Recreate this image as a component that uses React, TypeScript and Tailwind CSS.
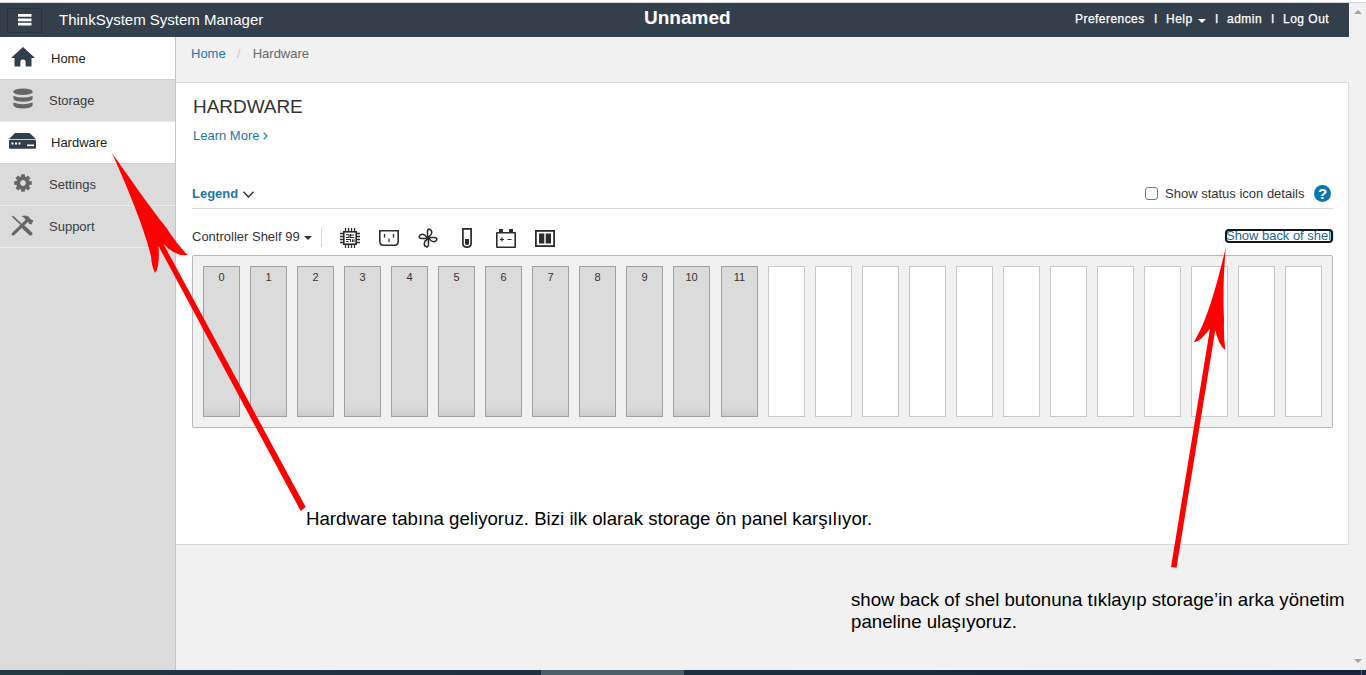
import type { ReactNode } from "react";

const ink = "#2b2b2b";

function HomeIcon() {
  return (
    <svg className="block" width="24" height="20" viewBox="0 0 24 20" fill="#323f4b">
      <path d="M12 0 L24 11 H20.500 V19.500 H14.600 V14.500 Q14.600 12.600 12 12.600 Q9.400 12.600 9.400 14.500 V19.500 H3.500 V11 H0 Z" />
    </svg>
  );
}

function StorageIcon() {
  return (
    <svg className="block" width="20" height="22" viewBox="0 0 20 22" fill="#666">
      <path d="M.4 3 Q2 .6 10 .5 Q18 .6 19.6 3 V4.600 Q18 6.800 10 7 Q2 6.800 .4 4.600 Z" />
      <path d="M.4 8 Q10 11 19.6 8 V11 Q18 13.600 10 13.800 Q2 13.600 .4 11 Z" />
      <path d="M.4 14.600 Q10 17.800 19.6 14.600 V17.600 Q18 20.400 10 20.600 Q2 20.400 .4 17.600 Z" />
    </svg>
  );
}

function HardwareIcon() {
  return (
    <svg className="block" width="27" height="16" viewBox="0 0 27 16">
      <path d="M6 0 H20.5 L27 6 H0 Z" fill="#323f4b" />
      <rect x="0" y="6.7" width="27" height="9" rx="1" fill="#323f4b" />
      <path d="M2.5 10.5h2M6 10.5h2M9.5 10.5h2" stroke="#fff" strokeWidth="2" />
      <path d="M18 12.3h7" stroke="#fff" strokeWidth="1.6" />
    </svg>
  );
}

function GearIcon() {
  return (
    <svg className="block" width="18" height="18" viewBox="-9 -9 18 18">
      <circle r="4.8" fill="none" stroke="#666" strokeWidth="3.8" />
      <g fill="#666">
        {[0, 45, 90, 135, 180, 225, 270, 315].map((a) => (
          <path key={a} d="M-2.100 -6 L-1.700 -8.800 H1.700 L2.100 -6 Z" transform={`rotate(${a})`} />
        ))}
      </g>
    </svg>
  );
}

function SupportIcon() {
  return (
    <svg className="block" width="23" height="21" viewBox="0 0 23 21">
      <path d="M1.4 1.2 L12 11.2" stroke="#666" strokeWidth="1.7" />
      <path d="M13 12.5 L19.5 18.6" stroke="#666" strokeWidth="3.8" strokeLinecap="round" />
      <path d="M2.3 18.8 L15.5 6.2" stroke="#666" strokeWidth="3.2" strokeLinecap="round" />
      <path d="M10.3 1.4 Q14.5 -.8 18.2 2 L19.5 4.2 L22.4 5.6 L20.4 9.6 L17.8 8.7 L17.2 6.8 L14.5 5.2 Q13.8 2.2 10.3 1.4 Z" fill="#666" />
    </svg>
  );
}

function ChipIcon() {
  return (
    <svg className="block" width="20" height="20" viewBox="0 0 20 20" fill="none" stroke={ink}>
      <rect x="3.8" y="3.8" width="12.4" height="12.4" strokeWidth="1.6" />
      <path d="M5.5 0v4M8.5 0v4M11.5 0v4M14.5 0v4M5.5 16v4M8.5 16v4M11.5 16v4M14.5 16v4M0 5.5h4M0 8.5h4M0 11.5h4M0 14.5h4M16 5.5h4M16 8.5h4M16 11.5h4M16 14.5h4" strokeWidth="1.3" />
      <path d="M6 6.8h3v2.7H6M10.6 6v3.5H14M11 7h3M6 11.5h4.5V14M6 13.5h2.5M12.5 11.2V14M14 11.5v2.5" strokeWidth="1.1" />
    </svg>
  );
}

function PowerIcon() {
  return (
    <svg className="block" width="20" height="16" viewBox="0 0 20 16" fill="none" stroke={ink}>
      <path d="M.8 .8 H19.2 V11 Q19.200 15.200 15.5 15.200 H4.5 Q.8 15.200 .8 11 Z" strokeWidth="1.6" />
      <path d="M5.500 4v3.500M14.500 4v3.500M10 8.500v3.500" strokeWidth="1.3" />
    </svg>
  );
}

function FanIcon() {
  return (
    <svg className="block" width="20" height="20" viewBox="-10 -10 20 20" fill="none" stroke={ink} strokeWidth="1.5">
      {[0, 90, 180, 270].map((a) => (
        <path key={a} d="M.8 -1.500 C4.400 -3 4.800 -7.500 1.500 -8.900 Q-.5 -8.800 -.5 -6.500 V-1.500" transform={`rotate(${a})`} />
      ))}
      <circle r="2.2" fill={ink} stroke="none" />
    </svg>
  );
}

function SensorIcon() {
  return (
    <svg className="block" width="10" height="20" viewBox="0 0 10 20">
      <path d="M.9 .9 H9.100 V15.5 Q9.100 19.100 5 19.100 Q.9 19.100 .9 15.5 Z" fill="none" stroke={ink} strokeWidth="1.700" />
      <path d="M3 11 H7 V15.5 Q7 17 5 17 Q3 17 3 15.5 Z" fill={ink} />
    </svg>
  );
}

function BatteryIcon() {
  return (
    <svg className="block" width="20" height="19" viewBox="0 0 20 19">
      <rect x=".8" y="3.7" width="18.4" height="14.5" rx=".5" fill="none" stroke={ink} strokeWidth="1.6" />
      <path d="M3 0h4v3.5H3zM13 0h4v3.5h-4z" fill={ink} />
      <path d="M4 10.500h4M6 8.500v4M11.500 10.500h4" stroke={ink} strokeWidth="1.2" />
    </svg>
  );
}

function ModuleIcon() {
  return (
    <svg className="block" width="20" height="17" viewBox="0 0 20 17">
      <rect x=".9" y=".9" width="18.2" height="15.2" fill="none" stroke={ink} strokeWidth="1.8" />
      <path d="M4 3.500h5.300v10H4zM10.700 3.500h5.300v10h-5.300z" fill={ink} />
    </svg>
  );
}

function Caret() {
  return (
    <svg className="block" width="8" height="4" viewBox="0 0 8 4" fill="currentColor">
      <path d="M0 0h8L4 4z" />
    </svg>
  );
}

type NavProps = { icon: ReactNode; label: string; active?: boolean };

function NavItem({ icon, label, active }: NavProps) {
  return (
    <a
      className={
        active
          ? "flex h-[42px] items-center border-b border-[#cfcfcf] bg-white text-[#222]"
          : "flex h-[42px] items-center border-b border-[#ececec] bg-[#dbdbdb] text-[#3c3c3c]"
      }
    >
      <span className="flex w-[45px] justify-center pb-[3px]">{icon}</span>
      <span className={active ? "pl-[6px]" : "pl-[4px]"}>{label}</span>
    </a>
  );
}

const firstColumns = Array.from({ length: 11 }, (_, i) => i);
const lastColumns = Array.from({ length: 13 }, (_, i) => i + 11);

function Bay({ index }: { index: number }) {
  if (index < 12) {
    return (
      <div className="h-[151px] w-[37px] border border-[#a0a0a0] bg-linear-to-b from-[#dbdbdb] from-93% to-[#cdcdcd] pt-[3px] text-center text-[11px] leading-[15px] text-[#333]">
        {index}
      </div>
    );
  }
  return <div className="h-[151px] w-[37px] border border-[#c8c8c8] bg-white" />;
}

export default function App() {
  return (
    <div className="relative flex h-[675px] w-[1366px] flex-col overflow-hidden bg-[#f1f1f1] font-['Liberation_Sans',Arial,sans-serif] text-[13px] leading-[16px] text-[#333]">
      <div className="h-[3px] shrink-0 border-b border-[#d3d7dc] bg-white" />
      <div className="flex h-[667px] shrink-0">
        <div className="flex w-[1349px] flex-col">
          <header className="flex h-[34px] shrink-0 bg-[#33404c] text-white">
            <button className="mt-[5px] ml-[7px] flex h-[25px] w-[35px] items-center justify-center border border-[#28333e] pb-[2px]">
              <svg width="14" height="12" viewBox="0 0 14 12" fill="#fff">
                <path d="M0 0h13.500v2.800H0zM0 4.400h13.500v2.800H0zM0 8.800h13.500v2.800H0z" />
              </svg>
            </button>
            <span className="w-[585px] pt-[8px] pl-[17px] text-[15px] leading-[18px]">ThinkSystem System Manager</span>
            <span className="w-[448px] pt-[5px] pl-[17px] text-[19px] leading-[20px] font-bold">Unnamed</span>
            <nav className="flex h-[24px] items-center pt-[8px] text-[12px] leading-[15px] [-webkit-text-stroke:0.25px_white]">
              <span className="w-[79px] tracking-[0.45px]">Preferences</span>
              <span className="w-[12px]">I</span>
              <span className="flex w-[49px] items-center gap-[5px] tracking-[0.5px]">
                Help
                <span className="pt-[3px]"><Caret /></span>
              </span>
              <span className="w-[12px]">I</span>
              <span className="w-[44px] tracking-[0.5px]">admin</span>
              <span className="w-[12px]">I</span>
              <span className="tracking-[0.5px]">Log Out</span>
            </nav>
          </header>

          <div className="flex h-[633px]">
            <aside className="w-[176px] shrink-0 border-r border-[#c4c4c4] bg-[#dbdbdb]">
              <div className="h-px bg-white" />
              <NavItem icon={<HomeIcon />} label="Home" active />
              <NavItem icon={<StorageIcon />} label="Storage" />
              <NavItem icon={<HardwareIcon />} label="Hardware" active />
              <NavItem icon={<GearIcon />} label="Settings" />
              <NavItem icon={<SupportIcon />} label="Support" />
            </aside>

            <main className="flex grow flex-col">
              <div className="flex h-[45px] pt-[9px] pl-[15px]">
                <a className="text-[#1b75b0]">Home</a>
                <span className="w-[27px] pl-[11px] text-[#c4c4c4]">/</span>
                <span className="text-[#666]">Hardware</span>
              </div>
              <section className="h-[463px] border-t border-r border-b border-[#d9d9d9] bg-white pl-[16px]">
                <h1 className="pt-[13px] pl-px text-[19px] leading-[22px] tracking-[-0.05px]">HARDWARE</h1>
                <div className="mt-[10px] flex items-center gap-[4px] pl-px text-[#1d78a5]">
                  <span>Learn More</span>
                  <svg width="5" height="8" viewBox="0 0 5 8" fill="none" stroke="currentColor" strokeWidth="1.2">
                    <path d="M.7 .7 4 4 .7 7.3" />
                  </svg>
                </div>

                <div className="mt-[37px] flex h-[28px] w-[1141px] border-b border-[#d9d9d9]">
                  <span className="mt-[5px] flex h-[16px] items-center gap-[5px] font-bold text-[#1d78a5]">
                    Legend
                    <svg width="11" height="7" viewBox="0 0 11 7" fill="none" stroke="#333" strokeWidth="1.5">
                      <path d="M.5 .8 5.5 6 10.5 .8" />
                    </svg>
                  </span>
                  <span className="mt-[2px] ml-auto flex h-[20px] items-center">
                    <span className="mt-px h-[13px] w-[13px] rounded-[3px] border border-[#767676] bg-white" />
                    <span className="mt-[2px] ml-[7px] w-[149px] whitespace-nowrap">Show status icon details</span>
                    <span className="mr-[2px] flex h-[17px] w-[17px] items-center justify-center rounded-full bg-[#0b76ae] text-[15px] leading-[17px] font-bold text-white">?</span>
                  </span>
                </div>

                <div className="flex h-[46px] w-[1141px]">
                  <span className="mt-[20px] flex h-[16px] w-[129px] items-center gap-[4px]">
                    <span className="whitespace-nowrap">Controller Shelf 99</span>
                    <span className="pt-[2px]"><Caret /></span>
                  </span>
                  <span className="mt-[18px] h-[20px] w-px bg-[#d8d8d8]" />
                  <span className="mt-[19px] ml-[18px] flex h-[20px] items-center">
                    <span className="w-[39px]"><ChipIcon /></span>
                    <span className="w-[39px]"><PowerIcon /></span>
                    <span className="w-[44px]"><FanIcon /></span>
                    <span className="w-[34px]"><SensorIcon /></span>
                    <span className="w-[39px]"><BatteryIcon /></span>
                    <ModuleIcon />
                  </span>
                  <a className="relative mt-[20px] ml-auto h-[14px] w-[108px] pl-px leading-[14px] whitespace-nowrap text-[#1d668a]">
                    <span className="block tracking-[-0.03px]">Show back of shell</span>
                    <span className="absolute inset-0 rounded-[4px] border-2 border-[#101820]" />
                  </a>
                </div>

                <div className="flex h-[173px] w-[1141px] justify-between rounded-[2px] border border-[#b8b8b8] bg-[#f1f1f1] px-[10px] pt-[10px]">
                  <div className="flex gap-[10px]">
                    {firstColumns.map((i) => (
                      <Bay key={i} index={i} />
                    ))}
                  </div>
                  <div className="flex gap-[10px]">
                    {lastColumns.map((i) => (
                      <Bay key={i} index={i} />
                    ))}
                  </div>
                </div>
              </section>
            </main>
          </div>
        </div>

        <div className="flex w-[17px] flex-col items-center justify-between bg-[#f1f1f1] pt-[7px] pb-[7px]">
          <svg width="8" height="4" viewBox="0 0 8 4" fill="#a3a3a3"><path d="M4 0l4 4H0z" /></svg>
          <svg width="8" height="4" viewBox="0 0 8 4" fill="#a3a3a3"><path d="M0 0h8L4 4z" /></svg>
        </div>
      </div>
      <footer className="flex h-[5px] shrink-0 bg-linear-to-r from-[#203840] to-[#17243c]">
        <div className="ml-[541px] w-[143px] bg-[#4d5e66]" />
        <div className="ml-[677px] w-px bg-[#59616f]" />
      </footer>

      <svg className="absolute top-0 left-0" width="1366" height="675" viewBox="0 0 1366 675" fill="#f00">
        <path d="M112 153 C127 174 146 202 166.500 228 Q177 244 187.500 255 Q176 257 163.500 244 L305.700 507 L300.700 511 L158.500 246 Q160 267 155 273 Q151.500 266 151 256 C145 232 133 200 112 153 Z" />
        <path d="M1226 246.500 C1223.500 270 1223 297 1224 320 Q1223.500 336 1225.300 350 Q1219 346 1215.300 330 L1176.500 567.800 L1171 567 L1210 328.500 Q1199.500 342.500 1194 342 Q1200 331 1203 324 C1212 303 1220 272 1226 246.500 Z" />
      </svg>
      <p className="absolute top-[508px] left-[306px] text-[18.67px] leading-[22px] whitespace-nowrap text-black">
        Hardware tabına geliyoruz. Bizi ilk olarak storage ön panel karşılıyor.
      </p>
      <p className="absolute top-[589px] left-[851px] text-[18.67px] leading-[22px] whitespace-nowrap text-black">
        show back of shel butonuna tıklayıp storage’in arka yönetim
        <br />
        paneline ulaşıyoruz.
      </p>
    </div>
  );
}
